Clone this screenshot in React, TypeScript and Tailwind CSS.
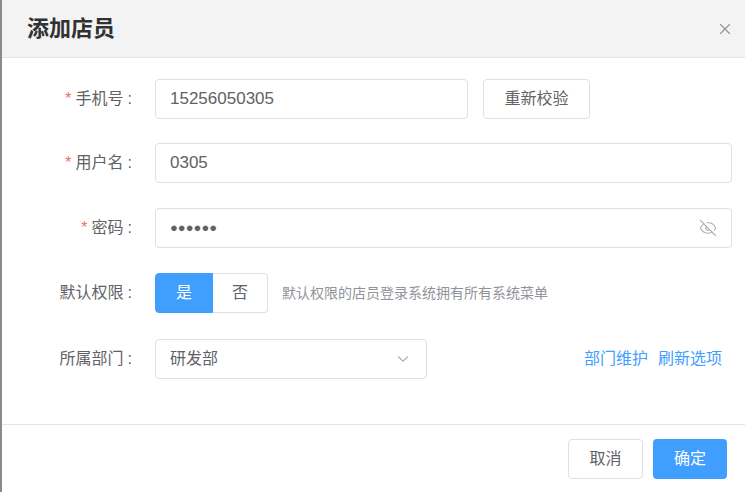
import React from "react";
import { X, EyeOff, ChevronDown } from "lucide-react";

function Label({ text, req }: { text: string; req?: boolean }) {
  return (
    <div className="w-[153px] shrink-0 text-right text-[16px] text-[#606266] pr-[23px] box-border">
      {req && <span className="text-[#f56c6c] mr-1">*</span>}
      {text}
      <span className="ml-1">:</span>
    </div>
  );
}

export default function App() {
  return (
    <div
      className="w-[745px] h-[492px] bg-white border-l-2 border-[#8a8a8a] flex flex-col overflow-hidden"
      style={{ fontFamily: '"Liberation Sans", "Noto Sans CJK SC", sans-serif' }}
    >
      <div className="h-[58px] bg-[#f3f3f3] border-b border-[#e4e4e4] flex items-center justify-between pl-[25px] pr-[11px] shrink-0">
        <div className="text-[22px] font-bold text-[#303133]">添加店员</div>
        <X className="w-[18px] h-[18px] text-[#909399]" strokeWidth={1.5} />
      </div>
      <div className="flex-1 flex flex-col pt-[21px] pr-[13px]">
        <div className="flex items-center h-[40px]">
          <Label text="手机号" req />
          <div className="w-[313px] h-[40px] border border-[#dcdfe6] rounded flex items-center px-[14px] text-[17px] text-[#606266]">15256050305</div>
          <button className="ml-[15px] w-[107px] h-[40px] border border-[#dcdfe6] rounded text-[16px] text-[#606266]">重新校验</button>
        </div>
        <div className="flex items-center h-[40px] mt-[24px]">
          <Label text="用户名" req />
          <div className="flex-1 h-[40px] border border-[#dcdfe6] rounded flex items-center px-[14px] text-[17px] text-[#606266]">0305</div>
        </div>
        <div className="flex items-center h-[40px] mt-[25px]">
          <Label text="密码" req />
          <div className="flex-1 h-[40px] border border-[#dcdfe6] rounded flex items-center justify-between px-[14px] text-[13px] text-[#606266]">
            <span>●●●●●●</span>
            <EyeOff className="w-[18px] h-[18px] text-[#b0b0b0]" strokeWidth={1.5} />
          </div>
        </div>
        <div className="flex items-center h-[40px] mt-[25px]">
          <Label text="默认权限" />
          <div className="flex h-[40px]">
            <div className="w-[58px] bg-[#409eff] text-white flex items-center justify-center text-[16px] rounded-l border border-[#409eff]">是</div>
            <div className="w-[55px] border border-[#dcdfe6] border-l-0 rounded-r flex items-center justify-center text-[16px] text-[#606266]">否</div>
          </div>
          <span className="ml-[14px] text-[14px] text-[#909399]">默认权限的店员登录系统拥有所有系统菜单</span>
        </div>
        <div className="flex items-center h-[40px] mt-[26px]">
          <Label text="所属部门" />
          <div className="w-[272px] h-[40px] border border-[#dcdfe6] rounded flex items-center justify-between px-[14px] text-[16px] text-[#606266]">
            研发部
            <ChevronDown className="w-[18px] h-[18px] text-[#b0b0b0]" strokeWidth={1.5} />
          </div>
          <div className="flex-1 flex justify-end gap-[10px] text-[16px] text-[#409eff] pr-[10px]">
            <span>部门维护</span>
            <span>刷新选项</span>
          </div>
        </div>
      </div>
      <div className="h-[68px] border-t border-[#e4e4e4] flex items-center justify-end gap-[10px] pr-[18px] shrink-0">
        <button className="w-[75px] h-[40px] border border-[#dcdfe6] rounded text-[16px] text-[#606266]">取消</button>
        <button className="w-[74px] h-[40px] bg-[#409eff] rounded text-[16px] text-white">确定</button>
      </div>
    </div>
  );
}
